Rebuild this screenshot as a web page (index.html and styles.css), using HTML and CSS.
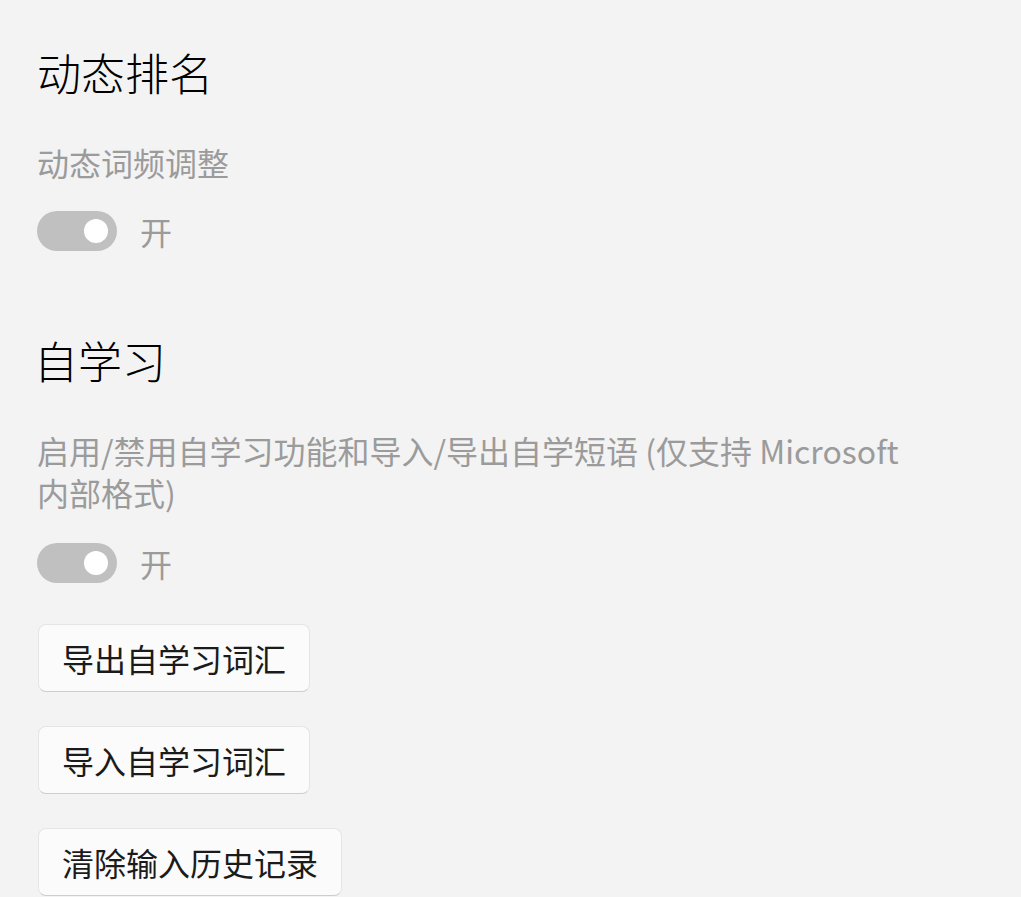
FILE: index.html
```html
<!DOCTYPE html>
<html lang="zh-CN">
<head>
    <meta charset="UTF-8">
    <meta name="viewport" content="width=device-width, initial-scale=1.0">
    <title>动态排名</title>
    <link rel="stylesheet" href="styles.css">
</head>
<body>
    <div class="page">
        <section class="group">
            <h2 class="group-title">动态排名</h2>
            <p class="group-desc">动态词频调整</p>
            <div class="toggle-row">
                <span class="toggle"><span class="knob"></span></span>
                <span class="toggle-label">开</span>
            </div>
        </section>

        <section class="group group-second">
            <h2 class="group-title">自学习</h2>
            <p class="group-desc">启用/禁用自学习功能和导入/导出自学短语 (仅支持 Microsoft 内部格式)</p>
            <div class="toggle-row">
                <span class="toggle"><span class="knob"></span></span>
                <span class="toggle-label">开</span>
            </div>
            <div class="actions">
                <button class="btn">导出自学习词汇</button>
                <button class="btn">导入自学习词汇</button>
                <button class="btn">清除输入历史记录</button>
            </div>
        </section>
    </div>
</body>
</html>
```

FILE: styles.css
```css
:root {
    --bg: #f3f3f3;
    --text: #000000;
    --muted: #9b9b9b;
    --toggle-off: #c0c0c0;
    --btn-bg: #fbfbfb;
    --btn-border: #e5e5e5;
    --btn-border-bottom: #cdcdcd;
    --btn-text: #1b1b1b;
}

body {
    margin: 0;
    background: var(--bg);
    color: var(--text);
    font-family: 'Noto Sans CJK SC', 'Noto Sans', sans-serif;
}

.page {
    padding: 42px 37px 0;
}

.group-second {
    margin-top: 79px;
}

.group-title {
    margin: 0;
    font-size: 44px;
    font-weight: 300;
    line-height: 60px;
}

.group-second .group-title {
    margin-left: -3px;
}

.group-desc {
    margin: 39px 0 0;
    max-width: 880px;
    font-size: 32px;
    line-height: 42px;
    color: var(--muted);
}

.toggle-row {
    display: flex;
    align-items: center;
    gap: 23px;
    margin-top: 28px;
    height: 40px;
}

.group-second .toggle-row {
    margin-top: 30px;
}

.toggle {
    display: flex;
    align-items: center;
    justify-content: flex-end;
    width: 80px;
    height: 40px;
    padding-right: 9px;
    box-sizing: border-box;
    border-radius: 20px;
    background: var(--toggle-off);
}

.knob {
    width: 24px;
    height: 24px;
    border-radius: 50%;
    background: #ffffff;
}

.toggle-label {
    font-size: 32px;
    line-height: 40px;
    color: var(--muted);
}

.actions {
    display: flex;
    flex-direction: column;
    align-items: flex-start;
    gap: 34px;
    margin-top: 41px;
}

.btn {
    height: 68px;
    padding: 0 23px;
    font-family: inherit;
    font-size: 32px;
    color: var(--btn-text);
    background: var(--btn-bg);
    border: 1px solid var(--btn-border);
    border-bottom-color: var(--btn-border-bottom);
    border-radius: 8px;
    margin-left: 1px;
    cursor: pointer;
}
```
